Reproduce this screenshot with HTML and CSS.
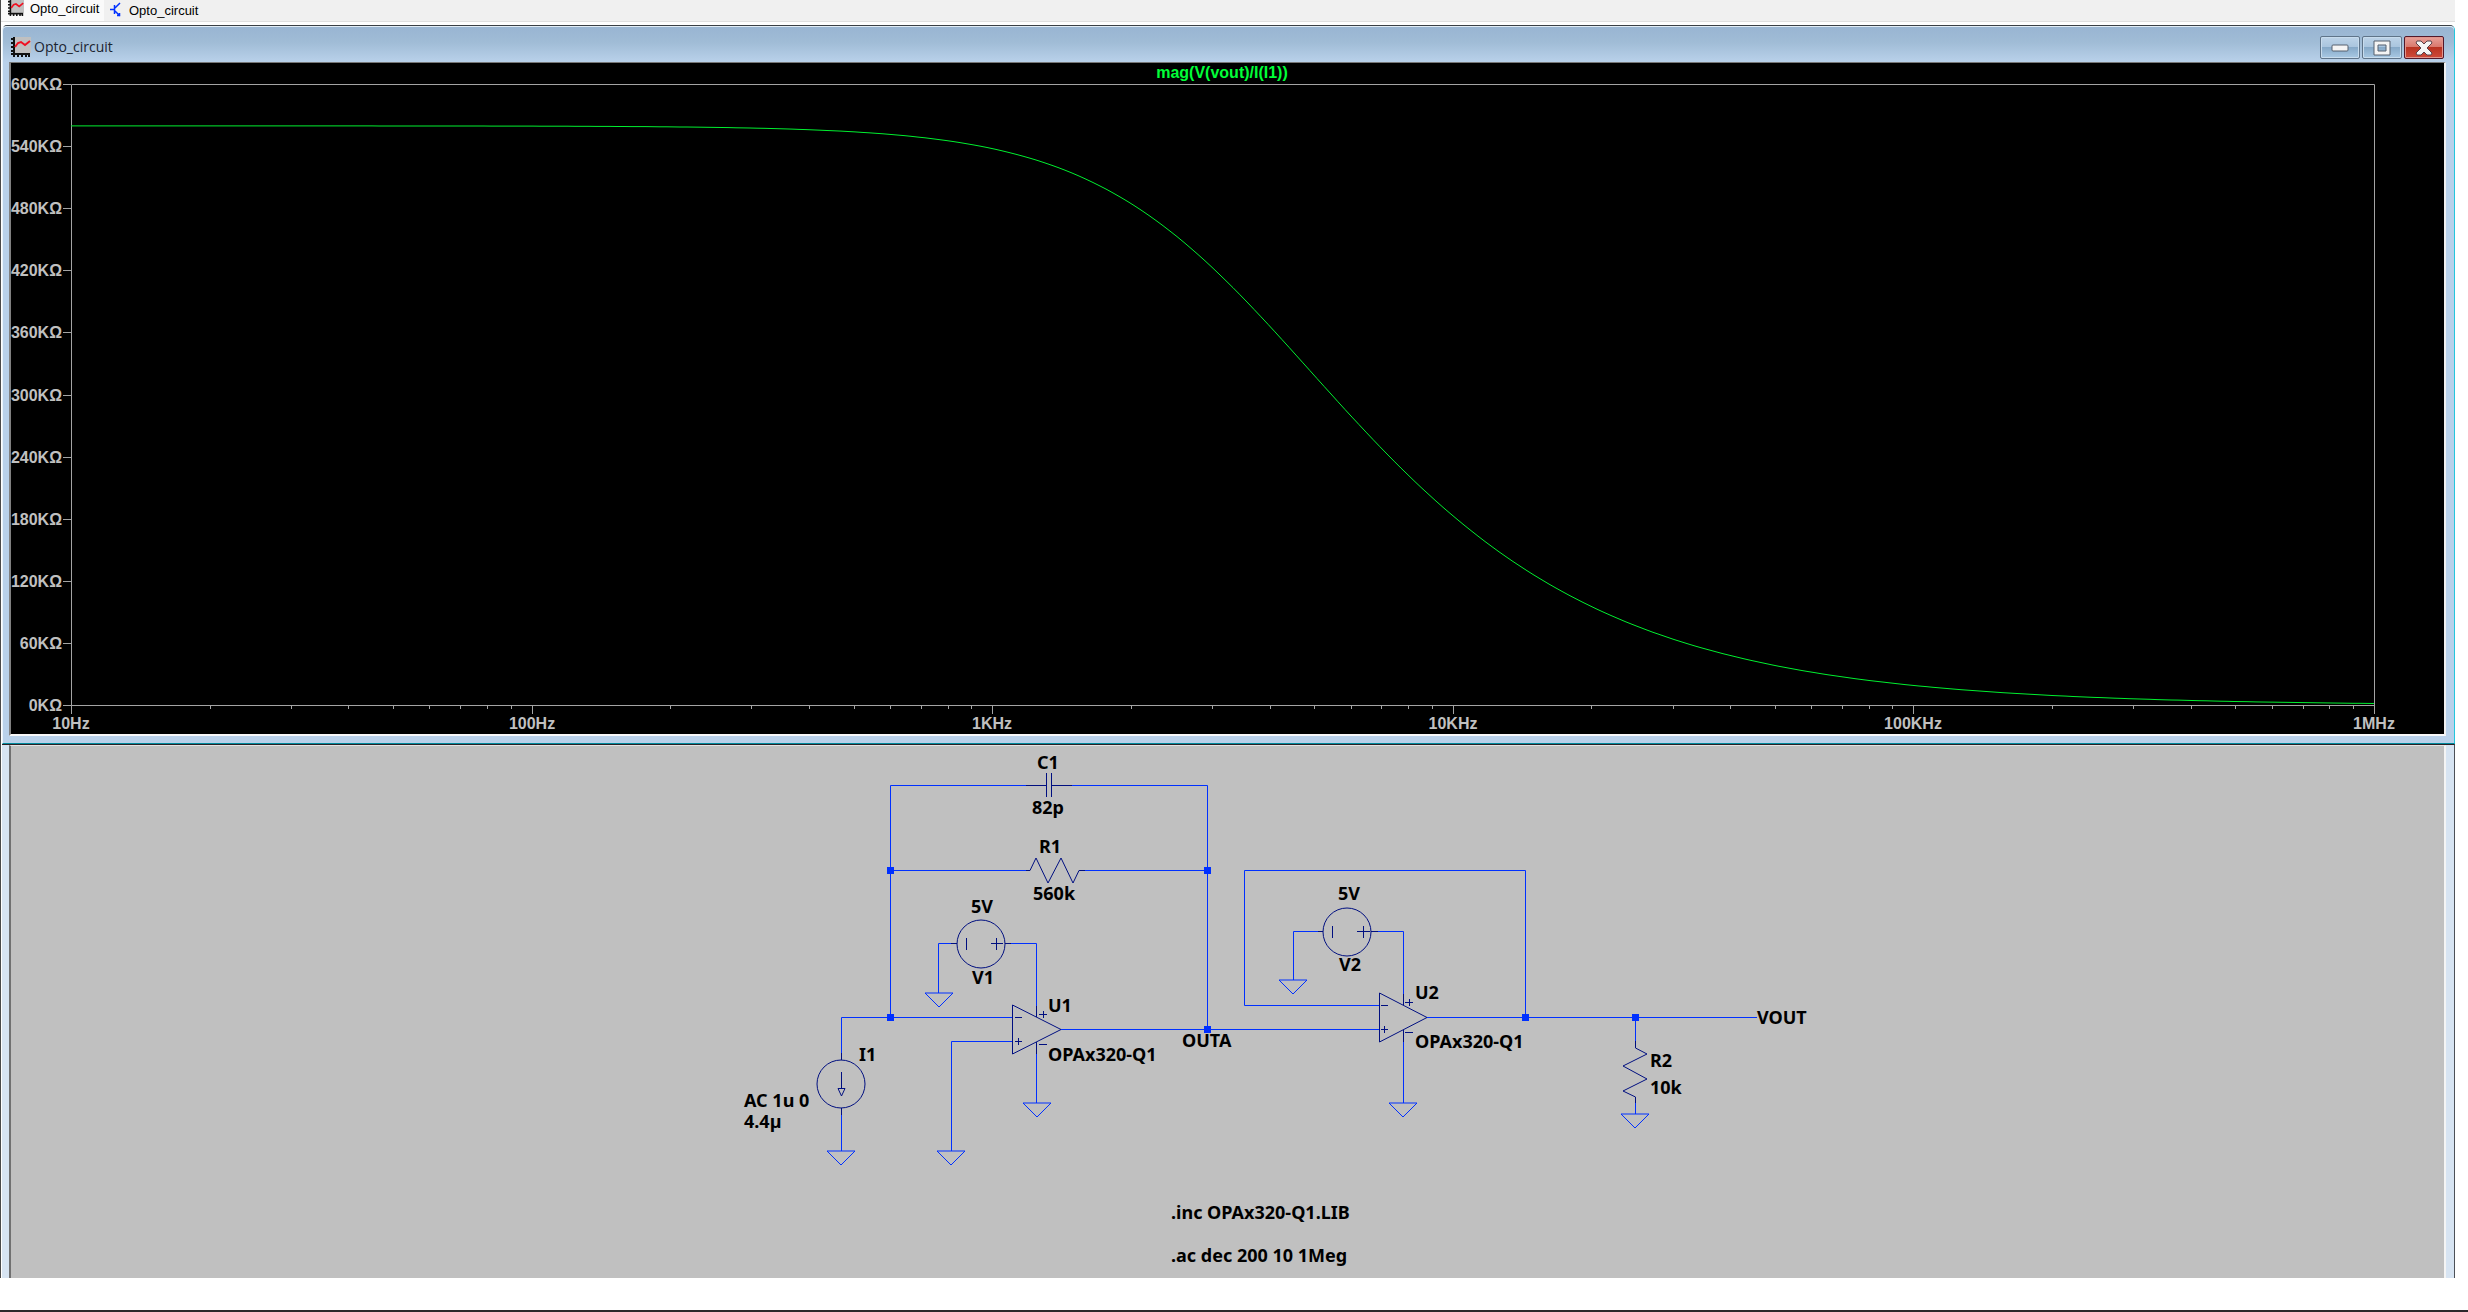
FILE: index.html
```html
<!DOCTYPE html>
<html lang="en">
<head>
    <meta charset="UTF-8">
    <meta name="viewport" content="width=device-width, initial-scale=1.0">
    <title>Opto_circuit</title>
    <link rel="stylesheet" href="styles.css">
</head>
<body>
    <!-- Shared symbols -->
    <svg class="defs" width="0" height="0">
        <symbol id="icon-plot" viewBox="0 0 20 20">
            <rect x="3" y="0" width="17" height="16" fill="#c0c0c0"/>
            <path d="M3 0V20M0 17H19M0 2H3M0 6H3M0 10H3M0 14H3M7 17V20M11 17V20M15 17V20M18 17V20" stroke="#111" stroke-width="2" fill="none"/>
            <path d="M4 10L7 6L10 5L14 8L19 4" stroke="#f01020" stroke-width="2" fill="none"/>
        </symbol>
        <symbol id="icon-npn" viewBox="0 0 12 16">
            <path d="M0 7.500H5M4.500 3V12M5 6L10 1M5 9L10 14M7 13.500H9.500V11" stroke="#0030ff" stroke-width="1.500" fill="none"/>
        </symbol>
        <symbol id="ground" viewBox="-14 0 28 14" overflow="visible">
            <path d="M-14 0H14L0 14Z"/>
        </symbol>
    </svg>

    <div class="app">
        <nav class="tabs">
            <a href="#plot" class="tab active"><svg class="tab-icon"><use href="#icon-plot"/></svg>Opto_circuit</a>
            <a href="#schematic" class="tab"><svg class="npn-icon"><use href="#icon-npn"/></svg>Opto_circuit</a>
        </nav>

        <section class="window" id="plot">
            <header class="titlebar">
                <svg class="title-icon"><use href="#icon-plot"/></svg>
                <h1>Opto_circuit</h1>
                <div class="controls">
                    <button type="button" aria-label="Minimize">
                        <svg width="18" height="8"><rect x="1" y="1" width="16" height="6" rx="1" fill="#f4f4f4" stroke="#56616e"/></svg>
                    </button>
                    <button type="button" aria-label="Maximize">
                        <svg width="18" height="16"><path d="M1 1H17V15H1ZM5 5V11H13V5Z" fill="#f4f4f4" fill-rule="evenodd" stroke="#56616e"/></svg>
                    </button>
                    <button type="button" class="close" aria-label="Close">
                        <svg width="18" height="16"><path d="M2 1H6L9 4L12 1H16L17 3L12 8L17 13L16 15H12L9 12L6 15H2L1 13L6 8L1 3Z" fill="#f4f4f4" stroke="#5b4048"/></svg>
                    </button>
                </div>
            </header>
            <svg class="plot" viewBox="11 63 2433 671">
                <text class="trace-name" x="1222" y="78">mag(V(vout)/I(I1))</text>
                <path id="axes" class="axes"/>
                <g id="labels" class="labels"></g>
                <path id="trace" class="trace"/>
            </svg>
        </section>

        <section class="sheet" id="schematic">
            <svg class="schematic" viewBox="11 746 2433 532">
                <!-- Wires -->
                <g class="wires">
                    <path d="M1026 785.5H890.5V1017.5M1072 785.5H1207.5V1029.5"/>
                    <path d="M890.5 870.5H1026M1085 870.5H1207.5"/>
                    <path d="M1012 1017.5H841.5V1053M841.5 1115V1151"/>
                    <path d="M1012 1041.5H951.5V1151"/>
                    <path d="M951 943.5H938.5V993M1011 943.5H1036.5V1006M1036.5 1054V1103"/>
                    <path d="M1061 1029.5H1379"/>
                    <path d="M1379 1005.5H1244.5V870.5H1525.5V1017.5"/>
                    <path d="M1318 931.5H1293.5V980M1378 931.5H1403.5V994M1403.5 1042V1103"/>
                    <path d="M1427 1017.5H1757M1635.5 1017.5V1041M1635.5 1103V1114"/>
                    <use href="#ground" x="827" y="1151" width="28" height="14"/>
                    <use href="#ground" x="937" y="1151" width="28" height="14"/>
                    <use href="#ground" x="925" y="993" width="28" height="14"/>
                    <use href="#ground" x="1023" y="1103" width="28" height="14"/>
                    <use href="#ground" x="1279" y="980" width="28" height="14"/>
                    <use href="#ground" x="1389" y="1103" width="28" height="14"/>
                    <use href="#ground" x="1621" y="1114" width="28" height="14"/>
                </g>

                <!-- Components -->
                <g class="parts">
                    <path d="M1026 785.5H1046.5M1051.5 785.5H1072M1046.5 773V797M1051.5 773V797"/>
                    <path d="M1026 870.5H1030L1036 858L1048 883L1061 858L1073 883L1079 870.5H1085"/>
                    <circle cx="981" cy="944" r="24"/>
                    <path d="M951 943.5H957M1005 943.5H1011M966.5 938V950M996.5 938V950M991 943.5H1003"/>
                    <circle cx="1347" cy="932" r="24"/>
                    <path d="M1318 931.5H1323M1371 931.5H1378M1332.5 926V938M1363.5 926V938M1357 931.5H1370"/>
                    <circle cx="841" cy="1084" r="24"/>
                    <path d="M841.5 1053V1060M841.5 1108V1115M841.5 1072V1088M838 1088.5H845L841.5 1096Z"/>
                    <path d="M1012.5 1005V1054L1061 1029.5ZM1036.5 1006V1017M1036.5 1042V1054"/>
                    <path d="M1015 1017.5H1022M1015 1041.5H1022M1018.5 1038V1045M1039 1014.5H1047M1043.5 1011V1018M1039 1044.5H1047"/>
                    <path d="M1379.5 993V1042L1427 1017.5ZM1403.5 994V1005M1403.5 1030V1042"/>
                    <path d="M1381 1005.5H1388M1381 1029.5H1388M1384.5 1026V1033M1405 1002.5H1413M1409.5 999V1006M1405 1032.5H1413"/>
                    <path d="M1635.5 1041V1048L1647 1054L1623 1066L1647 1079L1623 1091L1635.5 1097V1103"/>
                </g>

                <!-- Junctions -->
                <g class="nodes">
                    <rect x="887" y="867" width="7" height="7"/>
                    <rect x="1204" y="867" width="7" height="7"/>
                    <rect x="887" y="1014" width="7" height="7"/>
                    <rect x="1204" y="1026" width="7" height="7"/>
                    <rect x="1522" y="1014" width="7" height="7"/>
                    <rect x="1632" y="1014" width="7" height="7"/>
                </g>

                <g class="names">
                    <text x="1037" y="769">C1</text>
                    <text x="1032" y="814">82p</text>
                    <text x="1039" y="853">R1</text>
                    <text x="1033" y="900">560k</text>
                    <text x="971" y="913">5V</text>
                    <text x="972" y="984">V1</text>
                    <text x="1048" y="1012">U1</text>
                    <text x="1048" y="1061">OPAx320-Q1</text>
                    <text x="859" y="1061">I1</text>
                    <text x="744" y="1107">AC 1u 0</text>
                    <text x="744" y="1128">4.4µ</text>
                    <text x="1182" y="1047">OUTA</text>
                    <text x="1338" y="900">5V</text>
                    <text x="1339" y="971">V2</text>
                    <text x="1415" y="999">U2</text>
                    <text x="1415" y="1048">OPAx320-Q1</text>
                    <text x="1757" y="1024">VOUT</text>
                    <text x="1650" y="1067">R2</text>
                    <text x="1650" y="1094">10k</text>
                    <text x="1171" y="1219">.inc OPAx320-Q1.LIB</text>
                    <text x="1171" y="1262">.ac dec 200 10 1Meg</text>
                </g>
            </svg>
        </section>
    </div>

    <script>
        const left = 71, right = 2374, top_ = 84, bottom = 705;
        const decades = ['10Hz', '100Hz', '1KHz', '10KHz', '100KHz', '1MHz'];
        const decadeWidth = (right - left) / 5;
        const labels = document.getElementById('labels');

        function addLabel(text, x, y, anchor) {
            const label = document.createElementNS('http://www.w3.org/2000/svg', 'text');
            label.setAttribute('x', x);
            label.setAttribute('y', y);
            label.setAttribute('text-anchor', anchor);
            label.textContent = text;
            labels.appendChild(label);
        }

        // Frame
        let axes = `M${left + 0.5} ${top_ + 0.5}H${right + 0.5}V${bottom + 0.5}H${left + 0.5}Z`;

        // Impedance axis, 60K per division
        for (let i = 0; i <= 10; i++) {
            const y = Math.round(bottom - i * (bottom - top_) / 10);
            axes += `M63 ${y + 0.5}H${left}`;
            addLabel(i * 60 + 'KΩ', 62, y + 6, 'end');
        }

        // Log frequency axis
        decades.forEach((name, d) => {
            const x = Math.round(left + d * decadeWidth);
            axes += `M${x + 0.5} ${bottom}V714`;
            addLabel(name, x, 729, 'middle');
            if (d < 5) {
                for (let n = 2; n < 10; n++) {
                    const minor = Math.round(left + (d + Math.log10(n)) * decadeWidth);
                    axes += `M${minor + 0.5} ${bottom}V709`;
                }
            }
        });
        document.getElementById('axes').setAttribute('d', axes);

        // First order response of R1 and C1
        const R1 = 560e3;
        const C1 = 82e-12;
        const points = [];
        for (let x = left; x <= right; x += 7) {
            const f = Math.pow(10, 1 + (x - left) / decadeWidth);
            const mag = R1 / Math.hypot(1, 2 * Math.PI * f * R1 * C1);
            points.push(x + ' ' + (bottom + 0.5 - mag / 600e3 * (bottom - top_)).toFixed(1));
        }
        document.getElementById('trace').setAttribute('d', 'M' + points.join('L'));
    </script>
</body>
</html>
```
FILE: styles.css
```css
body {
    font-family: "Liberation Sans", Arial, sans-serif;
    margin: 0;
    background-color: #fff;
    border-bottom: 2px solid #2b282b;
}
svg {
    display: block;
}
.defs {
    position: absolute;
}
.app {
    margin: 0 13px 32px 0;
    border-left: 1px solid #4a4a4a;
}
.tabs {
    display: flex;
    height: 21px;
    background-color: #f0f0f0;
    border-bottom: 1px solid #dfdfdf;
    margin-bottom: 3px;
    overflow: hidden;
}
.tab {
    display: flex;
    align-items: flex-start;
    gap: 6px;
    box-sizing: border-box;
    font-size: 13px;
    line-height: 21px;
    color: #000;
    text-decoration: none;
    width: 96px;
    padding-left: 6px;
}
.tab.active {
    background-color: #fafafa;
    line-height: 17px;
    width: 103px;
    padding-left: 7px;
}
.tab-icon {
    width: 16px;
    height: 16px;
}
.npn-icon {
    width: 12px;
    height: 16px;
    margin: 2px 1px 0 0;
}
.window {
    margin-left: 1px;
    background-color: #b9d1ea;
    border: 1px solid #e8f3fb;
    border-top-color: #3a3f45;
    border-right-color: #23c6dc;
    border-bottom-color: #008a9c;
    border-radius: 5px 5px 0 0;
    padding: 0 8px 7px 6px;
}
.titlebar {
    display: flex;
    align-items: center;
    height: 36px;
    margin: 0 -8px 0 -6px;
    padding: 0 10px 0 8px;
    background: linear-gradient(#98b4d2, #a0bcd6 45%, #b9d1ea);
    box-shadow: inset 0 1px #e1edf6;
    box-sizing: border-box;
    border-radius: 4px 4px 0 0;
}
.title-icon {
    width: 20px;
    height: 20px;
    margin: 9px 3px 3px 0;
}
.titlebar h1 {
    flex: 1;
    margin: 10px 0 4px;
    font: 14px "Open Sans", sans-serif;
    line-height: 20px;
    color: #1b2430;
}
.controls {
    display: flex;
    gap: 2px;
    margin-top: 7px;
}
.controls button {
    display: flex;
    align-items: center;
    justify-content: center;
    width: 40px;
    height: 23px;
    padding: 0;
    border: 1px solid #5f7489;
    border-radius: 2px;
    background: linear-gradient(#bdd3e8, #a9c5de 48%, #86a9c8 50%, #a9c9e4);
    box-shadow: inset 0 0 0 1px #c8dced;
}
.controls .close {
    border-color: #52182a;
    background: linear-gradient(#e8a19a, #d9776c 48%, #b93322 50%, #cf4a3a);
    box-shadow: inset 0 0 0 1px #e0958c;
}
.plot {
    width: 100%;
    box-sizing: border-box;
    background-color: #000;
    border: 2px solid #808080;
    border-top: 1px solid #777;
    border-right-color: #f0f0f0;
    border-bottom-color: #f8f8f8;
}
.axes {
    stroke: #a4a4a4;
    fill: none;
}
.labels {
    font-size: 16px;
    font-weight: bold;
    fill: #c0c0c0;
}
.trace {
    stroke: #00f030;
    fill: none;
}
.trace-name {
    font-size: 16px;
    font-weight: bold;
    text-anchor: middle;
    fill: #00ff38;
}
.sheet {
    margin-left: 1px;
    padding: 0 8px 0 7px;
    background-color: #d7e4f2;
    border-top: 1px solid #2a2024;
    border-right: 1px solid #4c5057;
}
.schematic {
    width: 100%;
    box-sizing: border-box;
    background-color: #c0c0c0;
    border: 2px solid #707070;
    border-top: 1px solid #e4e4e4;
    border-right-color: #f4f4f4;
    border-bottom: 0;
}
.wires {
    stroke: #0030ff;
    fill: none;
}
.parts {
    stroke: #000f80;
    fill: none;
}
.nodes {
    fill: #0030ff;
}
.names {
    font: bold 18px "Noto Sans", sans-serif;
    fill: #000;
}
```
